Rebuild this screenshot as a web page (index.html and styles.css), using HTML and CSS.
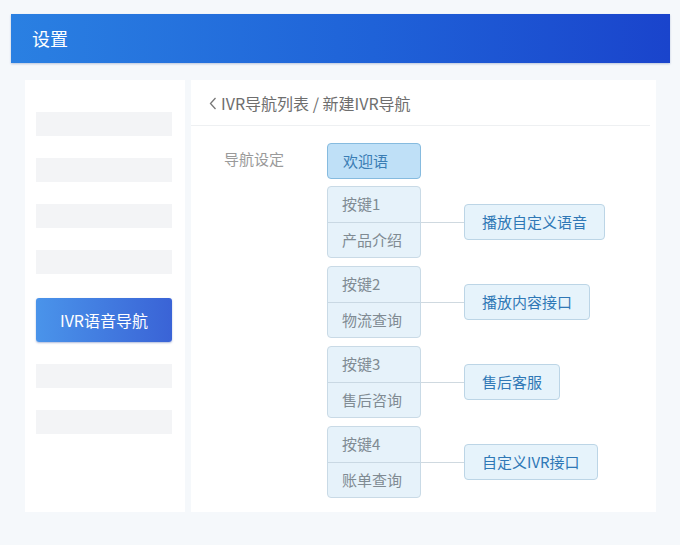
FILE: index.html
```html
<!DOCTYPE html>
<html lang="zh-CN">
<head>
  <meta charset="UTF-8" />
  <meta name="viewport" content="width=device-width, initial-scale=1.0"/>
  <title>设置 - IVR语音导航</title>
  <link rel="stylesheet" href="styles.css">
</head>
<body>

  <!-- Top bar -->
  <div class="topbar">设置</div>

  <div class="layout">
    <!-- Side menu -->
    <div class="sidebar">
      <div class="menu-item"></div>
      <div class="menu-item"></div>
      <div class="menu-item"></div>
      <div class="menu-item"></div>
      <div class="menu-item active">IVR语音导航</div>
      <div class="menu-item"></div>
      <div class="menu-item"></div>
    </div>

    <!-- Main panel -->
    <div class="main">
      <div class="crumbs">
        <svg class="back" width="8" height="13" viewBox="0 0 8 13"><path d="M6.5 1 L1.5 6.5 L6.5 12" fill="none" stroke="#777" stroke-width="1.3"/></svg>
        <span>IVR导航列表 / 新建IVR导航</span>
      </div>

      <div class="form">
        <div class="form-label">导航设定</div>
        <div class="tree">
          <div class="node welcome">欢迎语</div>

          <div class="branch">
            <div class="keys">
              <div class="key">按键1</div>
              <div class="key">产品介绍</div>
            </div>
            <div class="link"></div>
            <div class="action">播放自定义语音</div>
          </div>

          <div class="branch">
            <div class="keys">
              <div class="key">按键2</div>
              <div class="key">物流查询</div>
            </div>
            <div class="link"></div>
            <div class="action">播放内容接口</div>
          </div>

          <div class="branch">
            <div class="keys">
              <div class="key">按键3</div>
              <div class="key">售后咨询</div>
            </div>
            <div class="link"></div>
            <div class="action">售后客服</div>
          </div>

          <div class="branch">
            <div class="keys">
              <div class="key">按键4</div>
              <div class="key">账单查询</div>
            </div>
            <div class="link"></div>
            <div class="action">自定义IVR接口</div>
          </div>
        </div>
      </div>
    </div>
  </div>

</body>
</html>
```

FILE: styles.css
```css
body { margin: 0; padding: 14px 10px 0 11px; background: #f5f8fb; font-family: "Noto Sans CJK SC", "Noto Sans", sans-serif; }

.topbar { height: 49px; padding-left: 21px; line-height: 48px; color: #fff; font-size: 18px; background: linear-gradient(90deg, #2a80e2 0%, #1f62d8 55%, #1a44cc 100%); box-shadow: 0 1px 2px rgba(0,40,120,.25); }

.layout { display: flex; gap: 6px; margin: 17px 14px 0 14px; height: 432px; }

.sidebar { width: 160px; background: #fff; padding: 32px 0 0 11px; box-sizing: border-box; display: flex; flex-direction: column; gap: 22px; }
.menu-item { width: 136px; height: 24px; background: #f3f4f6; }
.menu-item.active { height: 44px; margin: 2px 0 0; border-radius: 3px; background: linear-gradient(90deg, #4a94ea, #3a63d6); color: #fff; font-size: 16px; line-height: 44px; text-align: center; box-shadow: 0 1px 2px rgba(30,60,150,.35); }

.main { flex: 1; background: #fff; }
.crumbs { height: 45px; margin-right: 6px; border-bottom: 1px solid #eef0f2; display: flex; align-items: center; gap: 4px; padding-left: 18px; color: #6e6e6e; font-size: 16px; }
.back { margin-top: 1px; }

.form { display: flex; padding-top: 17px; }
.form-label { width: 103px; padding-left: 33px; padding-top: 5px; color: #9a9a9a; font-size: 15px; }

.tree { display: flex; flex-direction: column; gap: 8px; }
.node, .key, .action { font-size: 15px; box-sizing: border-box; }
.node { width: 94px; height: 36px; line-height: 34px; padding-left: 15px; border-radius: 4px; }
.welcome { background: #bfe0f7; border: 1px solid #86bbdf; color: #3a7db4; margin-bottom: -1px; }

.branch { display: flex; align-items: center; }
.keys { width: 94px; box-sizing: border-box; border: 1px solid #c9dae6; border-radius: 4px; background: #e6f2fa; }
.key { height: 35px; line-height: 34px; padding-left: 14px; color: #808b93; }
.key + .key { border-top: 1px solid #c9d8e3; }
.link { width: 43px; height: 1px; background: #cfd9e0; }
.action { height: 36px; line-height: 34px; padding: 0 17px; border: 1px solid #bcd5e6; border-radius: 4px; background: #e6f3fb; color: #2f78b6; }
```
